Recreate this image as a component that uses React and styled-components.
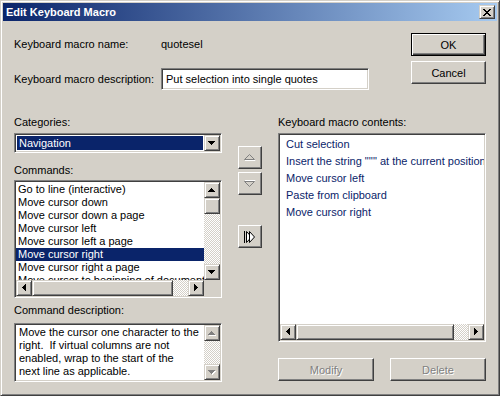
import styled, { createGlobalStyle, css } from 'styled-components';

const GlobalStyle = createGlobalStyle`
  body {
    margin: 0;
    background: #d4d0c8;
    font-family: "Liberation Sans", Arial, sans-serif;
    font-size: 11px;
    color: #000;
  }
`;

const raised = css`
  box-sizing: border-box;
  background: #d4d0c8;
  border: 1px solid;
  border-color: #d4d0c8 #404040 #404040 #d4d0c8;
  box-shadow: inset 1px 1px #fff, inset -1px -1px #808080;
`;

const sunken = css`
  box-sizing: border-box;
  border: 1px solid;
  border-color: #808080 #fff #fff #808080;
  box-shadow: inset 1px 1px #404040, inset -1px -1px #d4d0c8;
  padding: 1px;
  background: #fff;
`;

const checker = css`
  background-color: #fff;
  background-image: repeating-conic-gradient(#d4d0c8 0 25%, #fff 0 50%);
  background-size: 2px 2px;
`;

const Window = styled.div`
  width: 500px;
  height: 396px;
  box-sizing: border-box;
  background: #d4d0c8;
  border: 1px solid;
  border-color: #d4d0c8 #404040 #404040 #d4d0c8;
  box-shadow: inset 1px 1px #fff, inset -1px -1px #808080;
  padding: 2px;
  display: flex;
  flex-direction: column;
`;

const TitleBar = styled.div`
  height: 18px;
  flex-shrink: 0;
  display: flex;
  align-items: center;
  justify-content: space-between;
  padding: 0 2px 0 3px;
  background: linear-gradient(90deg, #0a246a, #a6caf0);
  color: #fff;
  font-weight: bold;
  font-size: 11px;
`;

const CloseButton = styled.div`
  ${raised};
  width: 16px;
  height: 14px;
  display: flex;
  align-items: center;
  justify-content: center;
`;

const Body = styled.div`
  flex: 1;
  padding: 0 11px;
  display: flex;
  flex-direction: column;
`;

const TopSection = styled.div`
  display: flex;
  justify-content: space-between;
  margin-top: 12px;
`;

const FieldGrid = styled.div`
  display: grid;
  grid-template-columns: 147px 208px;
  grid-auto-rows: 22px;
  row-gap: 13px;
  align-items: center;
`;

const ButtonColumn = styled.div`
  display: flex;
  flex-direction: column;
  gap: 5px;
`;

const TextInput = styled.input`
  ${sunken};
  height: 22px;
  width: 208px;
  padding: 0 4px;
  font: inherit;
  color: #000;
  outline: none;
`;

const PushButton = styled.button`
  box-sizing: border-box;
  width: ${(p) => p.$width}px;
  height: 23px;
  padding: 0;
  font: inherit;
  color: #000;
  background: #d4d0c8;
  border: 1px solid;
  border-color: #fff #404040 #404040 #fff;
  box-shadow: inset -1px -1px #808080;
  display: flex;
  align-items: center;
  justify-content: center;

  ${(p) =>
    p.$default &&
    css`
      border-color: #000;
      box-shadow: inset 1px 1px #fff, inset -1px -1px #404040, inset -2px -2px #808080;
    `}

  &:disabled {
    color: #808080;
    text-shadow: 1px 1px #fff;
  }
`;

const LowerSection = styled.div`
  display: grid;
  grid-template-columns: 208px 24px 208px;
  column-gap: 16px;
  margin-top: 26px;
`;

const Column = styled.div`
  display: flex;
  flex-direction: column;
`;

const MiddleColumn = styled.div`
  display: flex;
  flex-direction: column;
  padding-top: 30px;
  gap: 3px;
`;

const Label = styled.div`
  height: 13px;
  line-height: 13px;
  margin-top: ${(p) => p.$gap || 0}px;
  white-space: nowrap;
`;

const Combo = styled.div`
  ${sunken};
  margin-top: 4px;
  height: 20px;
  display: flex;
`;

const ComboValue = styled.div`
  flex: 1;
  padding: 1px;
  background: #fff;
`;

const Highlight = styled.div`
  height: 14px;
  line-height: 14px;
  padding-left: 2px;
  background: #0a246a;
  color: #fff;
`;

const ListBox = styled.div`
  ${sunken};
  margin-top: ${(p) => p.$gap}px;
  height: ${(p) => p.$height}px;
  display: grid;
  grid-template-columns: 1fr 16px;
  grid-template-rows: 1fr 16px;
`;

const ContentsBox = styled.div`
  ${sunken};
  margin-top: 4px;
  height: 209px;
  display: flex;
  flex-direction: column;
`;

const Items = styled.div`
  flex: 1;
  overflow: hidden;
  padding-top: 1px;
  min-width: 0;
`;

const Item = styled.div`
  height: ${(p) => p.$row}px;
  line-height: ${(p) => p.$row}px;
  padding-left: ${(p) => p.$indent}px;
  white-space: nowrap;
  color: ${(p) => (p.$selected ? '#fff' : p.$color || '#000')};
  background: ${(p) => (p.$selected ? '#0a246a' : 'transparent')};
`;

const Corner = styled.div`
  background: #d4d0c8;
`;

const VScroll = styled.div`
  width: 16px;
  display: flex;
  flex-direction: column;
`;

const HScroll = styled.div`
  height: 16px;
  display: flex;
  flex-shrink: 0;
`;

const ArrowButton = styled.div`
  ${raised};
  width: 16px;
  height: 16px;
  flex-shrink: 0;
  display: flex;
  align-items: center;
  justify-content: center;
`;

const Thumb = styled.div`
  ${raised};
  flex-shrink: 0;
  width: ${(p) => (p.$vertical ? 16 : p.$size)}px;
  height: ${(p) => (p.$vertical ? p.$size : 16)}px;
`;

const Track = styled.div`
  flex: 1;
  ${checker};
`;

const DescBox = styled.div`
  ${sunken};
  margin-top: 6px;
  height: 59px;
  display: flex;
`;

const DescText = styled.div`
  flex: 1;
  padding: 1px 3px;
  line-height: 13px;
  white-space: pre;
  overflow: hidden;
`;

const ToolButton = styled.div`
  box-sizing: border-box;
  width: 24px;
  height: 23px;
  background: #d4d0c8;
  border: 1px solid;
  border-color: #fff #404040 #404040 #fff;
  box-shadow: inset -1px -1px #808080;
  display: flex;
  align-items: center;
  justify-content: center;
  margin-top: ${(p) => p.$gap || 0}px;
`;

const ActionRow = styled.div`
  display: flex;
  justify-content: space-between;
  margin-top: 16px;
`;

const triangles = {
  up: 'M3 0h1v1h1v1h1v1h1v1H0V3h1V2h1V1h1z',
  down: 'M0 0h7v1H6v1H5v1H4v1H3V3H2V2H1V1H0z',
  left: 'M3 0h1v7H3V6H2V5H1V4H0V3h1V2h1V1h1z',
  right: 'M0 0h1v1h1v1h1v1h1v1H3v1H2v1H1v1H0z',
};

const Arrow = ({ dir, disabled }) => {
  const vertical = dir === 'up' || dir === 'down';
  const w = vertical ? 7 : 4;
  const h = vertical ? 4 : 7;
  const d = dir === 'right' ? 'M0 0h1v1h1v1h1v1h1v1H3v1H2v1H1v1H0z' : triangles[dir];
  return (
    <svg width={w + 1} height={h + 1} viewBox={`0 0 ${w + 1} ${h + 1}`} shapeRendering="crispEdges">
      {disabled && <path d={d} fill="#fff" transform="translate(1 1)" />}
      <path d={d} fill={disabled ? '#808080' : '#000'} />
    </svg>
  );
};

const CloseIcon = () => (
  <svg width="8" height="7" viewBox="0 0 8 7" shapeRendering="crispEdges">
    <path d="M0 0h2v1h1v1h2V1h1V0h2v1H7v1H6v1H5v1h1v1h1v1h1v1H6V6H5V5H3v1H2v1H0V6h1V5h1V4h1V3H2V2H1V1H0z" fill="#000" />
  </svg>
);

const MoveIcon = ({ down }) => (
  <svg width="12" height="7" viewBox="0 0 12 7">
    <g transform={down ? 'translate(0 7) scale(1 -1)' : undefined}>
      <polyline points="1,6.5 11,6.5 6,1.5" fill="none" stroke="#fff" strokeWidth="1" />
      <polygon points="0.5,5.5 10.5,5.5 5.5,0.5" fill="#d4d0c8" stroke="#808080" strokeWidth="1" />
    </g>
  </svg>
);

const AddIcon = () => (
  <svg width="12" height="12" viewBox="0 0 12 12">
    <line x1="0.5" y1="0" x2="0.5" y2="12" stroke="#000" />
    <polygon points="2.5,0.5 7.5,6 2.5,11.5" fill="#fff" stroke="#000" />
    <polygon points="5.5,0.5 10.5,6 5.5,11.5" fill="#fff" stroke="#000" />
  </svg>
);

const commands = [
  'Go to line (interactive)',
  'Move cursor down',
  'Move cursor down a page',
  'Move cursor left',
  'Move cursor left a page',
  'Move cursor right',
  'Move cursor right a page',
  'Move cursor to beginning of document',
];

const contents = [
  'Cut selection',
  'Insert the string "\'\'" at the current position',
  'Move cursor left',
  'Paste from clipboard',
  'Move cursor right',
];

const description =
  'Move the cursor one character to the\nright.  If virtual columns are not\nenabled, wrap to the start of the\nnext line as applicable.';

const App = () => {
  return (
    <>
      <GlobalStyle />
      <Window>
        <TitleBar>
          <span>Edit Keyboard Macro</span>
          <CloseButton>
            <CloseIcon />
          </CloseButton>
        </TitleBar>
        <Body>
          <TopSection>
            <FieldGrid>
              <span>Keyboard macro name:</span>
              <span>quotesel</span>
              <span>Keyboard macro description:</span>
              <TextInput defaultValue="Put selection into single quotes" readOnly />
            </FieldGrid>
            <ButtonColumn>
              <PushButton $width={75} $default>
                OK
              </PushButton>
              <PushButton $width={75}>Cancel</PushButton>
            </ButtonColumn>
          </TopSection>

          <LowerSection>
            <Column>
              <Label>Categories:</Label>
              <Combo>
                <ComboValue>
                  <Highlight>Navigation</Highlight>
                </ComboValue>
                <ArrowButton>
                  <Arrow dir="down" />
                </ArrowButton>
              </Combo>

              <Label $gap={11}>Commands:</Label>
              <ListBox $gap={3} $height={118}>
                <Items>
                  {commands.map((c, i) => (
                    <Item key={c} $row={13} $indent={2} $selected={i === 5}>
                      {c}
                    </Item>
                  ))}
                </Items>
                <VScroll>
                  <ArrowButton>
                    <Arrow dir="up" />
                  </ArrowButton>
                  <Thumb $vertical $size={16} />
                  <Track />
                  <ArrowButton>
                    <Arrow dir="down" />
                  </ArrowButton>
                </VScroll>
                <HScroll>
                  <ArrowButton>
                    <Arrow dir="left" />
                  </ArrowButton>
                  <Thumb $size={141} />
                  <Track />
                  <ArrowButton>
                    <Arrow dir="right" />
                  </ArrowButton>
                </HScroll>
                <Corner />
              </ListBox>

              <Label $gap={6}>Command description:</Label>
              <DescBox>
                <DescText>{description}</DescText>
                <VScroll>
                  <ArrowButton>
                    <Arrow dir="up" disabled />
                  </ArrowButton>
                  <Track />
                  <ArrowButton>
                    <Arrow dir="down" disabled />
                  </ArrowButton>
                </VScroll>
              </DescBox>
            </Column>

            <MiddleColumn>
              <ToolButton>
                <MoveIcon />
              </ToolButton>
              <ToolButton>
                <MoveIcon down />
              </ToolButton>
              <ToolButton $gap={27}>
                <AddIcon />
              </ToolButton>
            </MiddleColumn>

            <Column>
              <Label>Keyboard macro contents:</Label>
              <ContentsBox>
                <Items>
                  {contents.map((c) => (
                    <Item key={c} $row={17} $indent={6} $color="#0a246a">
                      {c}
                    </Item>
                  ))}
                </Items>
                <HScroll>
                  <ArrowButton>
                    <Arrow dir="left" />
                  </ArrowButton>
                  <Thumb $size={158} />
                  <Track />
                  <ArrowButton>
                    <Arrow dir="right" />
                  </ArrowButton>
                </HScroll>
              </ContentsBox>
              <ActionRow>
                <PushButton $width={96} disabled>
                  Modify
                </PushButton>
                <PushButton $width={96} disabled>
                  Delete
                </PushButton>
              </ActionRow>
            </Column>
          </LowerSection>
        </Body>
      </Window>
    </>
  );
};

export default App;
